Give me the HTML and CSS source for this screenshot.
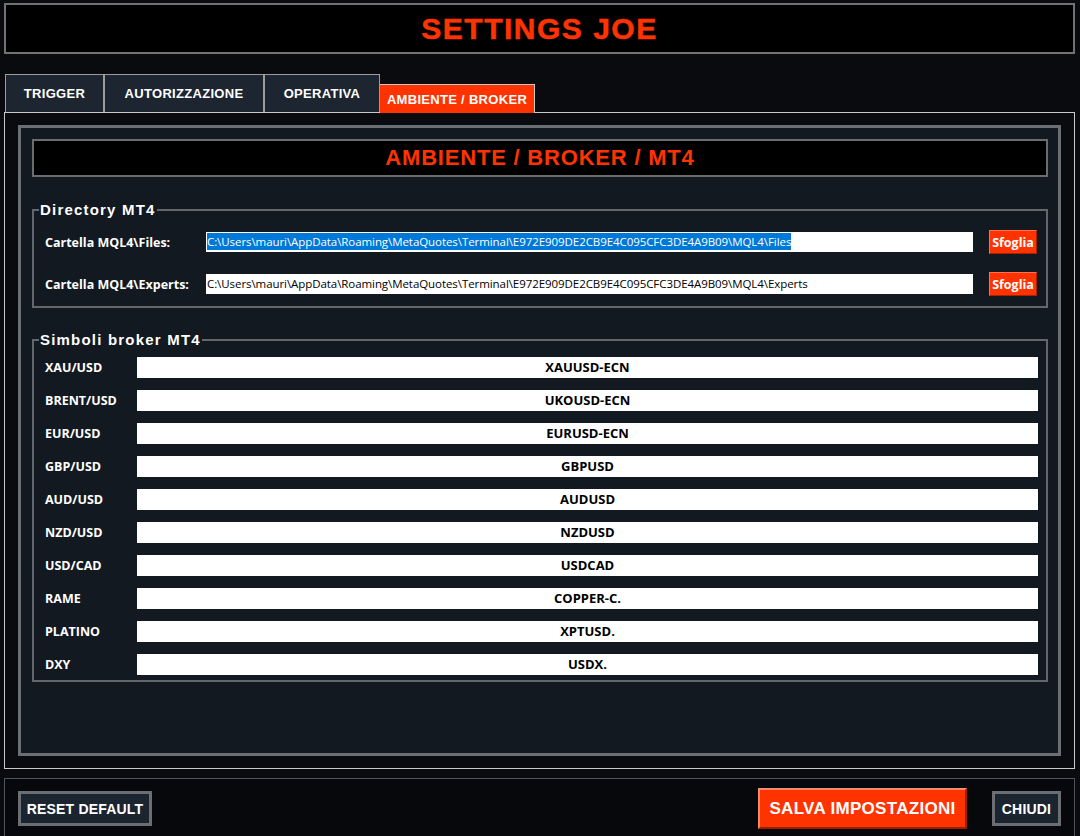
FILE: index.html
```html
<!DOCTYPE html>
<html lang="it">
<head>
    <meta charset="UTF-8">
    <meta name="viewport" content="width=device-width, initial-scale=1.0">
    <title>Settings Joe</title>
    <link rel="stylesheet" href="styles.css">
</head>
<body>
    <!-- Titolo -->
    <div class="title-bar">
        <h1>SETTINGS JOE</h1>
    </div>

    <!-- Schede -->
    <div class="tabs">
        <div class="tab tab-trigger">TRIGGER</div>
        <div class="tab tab-auth">AUTORIZZAZIONE</div>
        <div class="tab tab-op">OPERATIVA</div>
        <div class="tab tab-env active">AMBIENTE / BROKER</div>
    </div>

    <div class="tab-panel">
        <div class="inner-panel">
            <div class="section-header">AMBIENTE / BROKER / MT4</div>

            <fieldset class="group group-dir">
                <legend>Directory MT4</legend>
                <div class="dir-row">
                    <label>Cartella MQL4\Files:</label>
                    <div class="text-input path"><span class="selected">C:\Users\mauri\AppData\Roaming\MetaQuotes\Terminal\E972E909DE2CB9E4C095CFC3DE4A9B09\MQL4\Files</span></div>
                    <button class="browse-btn">Sfoglia</button>
                </div>
                <div class="dir-row">
                    <label>Cartella MQL4\Experts:</label>
                    <div class="text-input path">C:\Users\mauri\AppData\Roaming\MetaQuotes\Terminal\E972E909DE2CB9E4C095CFC3DE4A9B09\MQL4\Experts</div>
                    <button class="browse-btn">Sfoglia</button>
                </div>
            </fieldset>

            <fieldset class="group group-symbols">
                <legend>Simboli broker MT4</legend>
                <div class="symbol-list" id="symbolList"></div>
            </fieldset>
        </div>
    </div>

    <!-- Barra pulsanti -->
    <div class="bottom-bar">
        <button class="btn btn-dark btn-reset">RESET DEFAULT</button>
        <button class="btn btn-save">SALVA IMPOSTAZIONI</button>
        <button class="btn btn-dark btn-close">CHIUDI</button>
    </div>

    <script>
        // Simboli del broker
        const simboli = [
            ["XAU/USD", "XAUUSD-ECN"],
            ["BRENT/USD", "UKOUSD-ECN"],
            ["EUR/USD", "EURUSD-ECN"],
            ["GBP/USD", "GBPUSD"],
            ["AUD/USD", "AUDUSD"],
            ["NZD/USD", "NZDUSD"],
            ["USD/CAD", "USDCAD"],
            ["RAME", "COPPER-C."],
            ["PLATINO", "XPTUSD."],
            ["DXY", "USDX."]
        ];

        const list = document.getElementById('symbolList');
        simboli.forEach(function (s) {
            const row = document.createElement('div');
            row.className = 'symbol-row';
            row.innerHTML = '<label>' + s[0] + '</label><div class="text-input symbol">' + s[1] + '</div>';
            list.appendChild(row);
        });
    </script>
</body>
</html>
```

FILE: styles.css
```css
:root {
    --page-bg: #090b0f;
    --panel-bg: #131920;
    --accent: #ff3300;
    --frame: #6b6f74;
}

body {
    margin: 0;
    padding: 0;
    background-color: var(--page-bg);
    font-family: 'Liberation Sans', Arial, sans-serif;
    color: #fff;
    overflow: hidden;
}

/* Titolo */
.title-bar {
    margin: 3px 5px 0 4px;
    height: 51px;
    box-sizing: border-box;
    border: 2px solid #727272;
    background-color: #000;
    display: flex;
    justify-content: center;
    align-items: center;
}

.title-bar h1 {
    margin: 0;
    font-size: 30px;
    font-weight: 700;
    letter-spacing: 1.5px;
    color: var(--accent);
    -webkit-text-stroke: 0.5px var(--accent);
}

/* Schede */
.tabs {
    display: flex;
    align-items: flex-end;
    margin: 20px 0 0 5px;
    height: 38px;
}

.tab {
    box-sizing: border-box;
    height: 38px;
    display: flex;
    justify-content: center;
    align-items: center;
    background-color: #1c2530;
    border: 1px solid #9c9c9c;
    border-bottom: none;
    font-size: 13px;
    font-weight: 700;
    letter-spacing: 0.3px;
}

.tab-trigger { width: 99px; }
.tab-auth { width: 160px; }
.tab-op { width: 116px; }

.tab.active {
    width: 155px;
    height: 29px;
    margin-bottom: -1px;
    padding-top: 1px;
    position: relative;
    background-color: var(--accent);
    border-color: #c8c8c8;
    border-left: none;
}

.tab-panel {
    margin: 0 5px 0 4px;
    height: 657px;
    box-sizing: border-box;
    border: 1px solid #c9c9c9;
    padding: 12px 13px;
}

.inner-panel {
    height: 631px;
    box-sizing: border-box;
    border: 3px solid var(--frame);
    background-color: var(--panel-bg);
    padding: 11px 10px 0 11px;
}

.section-header {
    height: 38px;
    box-sizing: border-box;
    border: 2px solid #6a6d70;
    background-color: #000;
    display: flex;
    justify-content: center;
    align-items: center;
    color: var(--accent);
    font-size: 22px;
    font-weight: 700;
    letter-spacing: 0.8px;
}

/* Gruppi */
.group {
    margin: 25px 0 0 0;
    padding: 0 8px 0 11px;
    border: 2px solid #62676d;
    min-width: 0;
}

.group legend {
    margin-left: -6px;
    padding: 0 1px;
    font-size: 15px;
    font-weight: 700;
    letter-spacing: 1.2px;
    line-height: 16px;
}

.group-dir {
    padding-top: 12px;
    padding-bottom: 10px;
}

.group-symbols {
    margin-top: 24px;
    padding-top: 9px;
    padding-bottom: 5px;
}

label {
    font-family: 'Open Sans', sans-serif;
    font-size: 12.5px;
    font-weight: 700;
    color: #fff;
}

.dir-row {
    display: grid;
    grid-template-columns: 145px 767px 48px;
    column-gap: 16px;
    align-items: center;
    height: 24px;
}

.dir-row + .dir-row {
    margin-top: 18px;
}

.text-input {
    background-color: #fff;
    color: #000;
    box-sizing: border-box;
    white-space: nowrap;
    overflow: hidden;
}

.text-input.path {
    height: 20px;
    padding: 0 1px;
    font-family: 'Open Sans', sans-serif;
    font-size: 11.5px;
    line-height: 20px;
    letter-spacing: -0.07px;
}

.selected {
    background-color: #0078d7;
    color: #fff;
    padding: 1px 0;
}

.browse-btn {
    height: 24px;
    padding: 0;
    box-sizing: border-box;
    background-color: var(--accent);
    border: 1px solid;
    border-color: #ff7050 #a82000 #a82000 #ff7050;
    color: #fff;
    font-family: 'Open Sans', sans-serif;
    font-size: 12.5px;
    font-weight: 700;
}

/* Simboli */
.symbol-row {
    display: grid;
    grid-template-columns: 92px 1fr;
    align-items: center;
    height: 21px;
}

.symbol-row + .symbol-row {
    margin-top: 12px;
}

.text-input.symbol {
    height: 21px;
    text-align: center;
    font-family: 'Open Sans', sans-serif;
    font-size: 13px;
    font-weight: 700;
    line-height: 21px;
}

/* Barra pulsanti */
.bottom-bar {
    margin: 9px 5px 0 4px;
    height: 70px;
    box-sizing: border-box;
    border: 1px solid #4f545a;
    background-color: #06080b;
    display: flex;
    align-items: flex-start;
    padding: 9px 13px 0 13px;
}

.btn {
    box-sizing: border-box;
    color: #fff;
    font-family: 'Liberation Sans', Arial, sans-serif;
    font-weight: 700;
    padding: 0;
    cursor: pointer;
}

.btn-dark {
    margin-top: 3px;
    height: 35px;
    background-color: #1b2530;
    border: 3px solid var(--frame);
    font-size: 14px;
    letter-spacing: 0.2px;
}

.btn-reset {
    width: 134px;
}

.btn-close {
    width: 69px;
}

.btn-save {
    margin-left: auto;
    margin-right: 25px;
    width: 209px;
    height: 41px;
    background-color: var(--accent);
    border: 2px solid;
    border-color: #ff8a6a #9a1e00 #9a1e00 #ff8a6a;
    font-size: 17px;
    letter-spacing: 0.3px;
}
```
